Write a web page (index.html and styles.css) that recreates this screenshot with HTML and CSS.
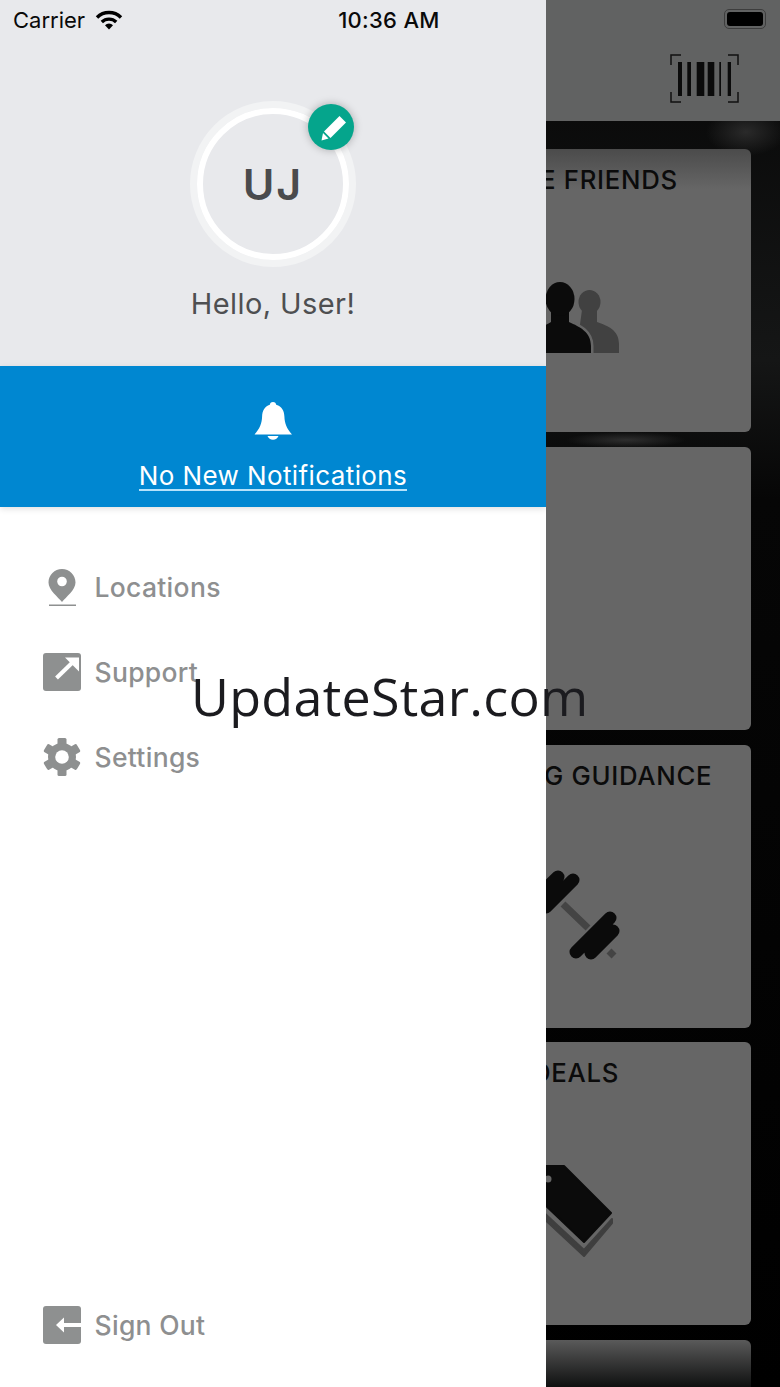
FILE: index.html
```html
<!DOCTYPE html>
<html>
	<head>
		<meta charset="utf-8">
		<title>Menu</title>
		<link rel="stylesheet" href="styles.css">
	</head>
	<body>
		<div id="screen">
			<div id="drawer">
				<div id="profile">
					<div id="statusBar">
						<span class="carrier">Carrier</span>
						<svg class="wifi" viewBox="0 0 28 21">
							<path d="M2 8.500a17 17 0 0 1 24 0" fill="none" stroke="#000" stroke-width="3.400"/>
							<path d="M6.800 13a10.400 10.400 0 0 1 14.400 0" fill="none" stroke="#000" stroke-width="3.400"/>
							<path d="M10 16.200a5.600 5.600 0 0 1 8 0L14 20.600z" fill="#000"/>
						</svg>
						<span class="time">10:36 AM</span>
					</div>
					<div id="avatar">
						<span class="initials">UJ</span>
						<div id="editBadge">
							<svg viewBox="0 0 46 46">
								<path d="M31.500 12l6.500 6.500L22.500 34 16 27.500z" fill="#fff"/>
								<path d="M15 29l5.500 5.500-7 2z" fill="#fff"/>
							</svg>
						</div>
					</div>
					<div class="hello">Hello, User!</div>
				</div>
				<div id="notifications">
					<svg class="bell" viewBox="0 0 38 38">
						<path d="M19 0c2 0 3 1.200 3.200 2.700C28 4.200 30.200 9 30.400 14.500c.2 6.500 2.200 12 7.600 18H.5c5.400-6 7.400-11.500 7.600-18C8.300 9 10.500 4.200 15.800 2.700 16 1.200 17 0 19 0z" fill="#fff"/>
						<path d="M13.500 34h11c-.8 2.300-3 3.800-5.500 3.800s-4.700-1.500-5.500-3.800z" fill="#fff"/>
					</svg>
					<a class="notifyLink">No New Notifications</a>
				</div>
				<div id="menu">
					<div class="menuRow">
						<svg class="menuIcon" viewBox="0 0 38 38">
							<path d="M19 1C11.500 1 5.500 7 5.500 14.500 5.500 22 15 29 19 34c4-5 13.500-12 13.500-19.500C32.500 7 26.500 1 19 1z" fill="#8e9090"/>
							<circle cx="19" cy="13.500" r="4.800" fill="#fff"/>
							<rect x="6" y="36.500" width="27" height="1.500" fill="#8e9090"/>
						</svg>
						<span>Locations</span>
					</div>
					<div class="menuRow">
						<svg class="menuIcon" viewBox="0 0 38 38">
							<rect width="38" height="38" rx="3" fill="#8e9090"/>
							<path d="M13.500 25L30 9" stroke="#fff" stroke-width="4"/>
							<path d="M22 4.500h14v14z" fill="#fff"/>
						</svg>
						<span>Support</span>
					</div>
					<div class="menuRow">
						<svg class="menuIcon" viewBox="0 0 38 38">
							<g fill="#8e9090">
								<rect x="14.500" y="0" width="9" height="38" rx="1.500"/>
								<rect x="14.500" y="0" width="9" height="38" rx="1.500" transform="rotate(60 19 19)"/>
								<rect x="14.500" y="0" width="9" height="38" rx="1.500" transform="rotate(120 19 19)"/>
								<circle cx="19" cy="19" r="14"/>
							</g>
							<circle cx="19" cy="19" r="6.800" fill="#fff"/>
						</svg>
						<span>Settings</span>
					</div>
					<div class="menuRow signOut">
						<svg class="menuIcon" viewBox="0 0 38 38">
							<rect width="38" height="38" rx="3" fill="#8e9090"/>
							<path d="M18 19h20" stroke="#fff" stroke-width="4"/>
							<path d="M13 19l8-7.500v15z" fill="#fff"/>
						</svg>
						<span>Sign Out</span>
					</div>
				</div>
			</div>
			<div id="backdrop">
				<div id="topBar">
					<div class="battery"><div class="batteryFill"></div></div>
					<svg class="barcode" viewBox="0 0 69 49">
						<path d="M11 1H1v10M58 1h10v10M1 38v10h10M68 38v10H58" fill="none" stroke="#111" stroke-width="1.500"/>
						<g fill="#0b0b0b">
							<rect x="8" y="8" width="4" height="34"/>
							<rect x="17.300" y="8" width="3.700" height="34"/>
							<rect x="26.700" y="8" width="7.600" height="34"/>
							<rect x="37.700" y="8" width="6.600" height="34"/>
							<rect x="49.300" y="8" width="1.700" height="34"/>
							<rect x="57.700" y="8" width="3.300" height="34"/>
						</g>
					</svg>
				</div>
				<div id="cards">
					<div class="card cardFade">
						<div class="cardTitle friendsTitle">E FRIENDS</div>
						<svg class="cardIcon" viewBox="0 0 90 90">
							<ellipse cx="43.500" cy="32" rx="11" ry="12" fill="#414141"/>
							<path d="M36 40h15v12c11 4 22 8 22 22v9H30z" fill="#414141"/>
							<path d="M-17 83V72c0-10 12-14 22-20V40h18v12c11 5 22 10 22 24v7z" fill="#0b0b0b" stroke="#666" stroke-width="5" paint-order="stroke"/>
							<ellipse cx="14" cy="29" rx="14.500" ry="17" fill="#0b0b0b"/>
						</svg>
					</div>
					<div class="card"></div>
					<div class="card">
						<div class="cardTitle guidanceTitle">G GUIDANCE</div>
						<svg class="cardIcon" viewBox="0 0 90 90">
							<path d="M17 38l25 24M63 85l5 5" stroke="#444" stroke-width="7" fill="none"/>
							<g stroke="#0b0b0b" stroke-width="13" stroke-linecap="round" fill="none">
								<path d="M30 86L64 52M45 87L67 65M12 11L-25 47M27 14L0 41"/>
							</g>
						</svg>
					</div>
					<div class="card">
						<div class="cardTitle dealsTitle">DEALS</div>
						<svg class="cardIcon" viewBox="0 0 90 90">
							<path d="M-5 47L38 87 66 56V60L38 93-5 53z" fill="#3f3f3f" stroke="#3f3f3f" stroke-linejoin="round" stroke-width="2"/>
							<path d="M-5 3H18L65 50 38 79-5 38z" fill="#0b0b0b" stroke="#0b0b0b" stroke-linejoin="round" stroke-width="2"/>
							<circle cx="2" cy="16" r="3.500" fill="#666"/>
						</svg>
					</div>
					<div class="card cardLast"></div>
				</div>
			</div>
			<div id="watermark">UpdateStar.com</div>
		</div>
	</body>
</html>
```

FILE: styles.css
```css
html, body{
	margin:0;
	padding:0;
}
body{
	font-family:"Inter","Liberation Sans",sans-serif;
}
#screen{
	position:relative;
	display:flex;
	width:780px;
	height:1387px;
	overflow:hidden;
}
#drawer{
	display:flex;
	flex-direction:column;
	width:546px;
	background-color:#fff;
}
#profile{
	display:flex;
	flex-direction:column;
	align-items:center;
	height:366px;
	background-color:#e8e9ec;
}
#statusBar{
	display:flex;
	align-items:center;
	align-self:stretch;
	height:40px;
	padding-left:13px;
	color:#0a0a0a;
	font-size:22px;
}
.wifi{
	width:28px;
	height:21px;
	margin:-2px 0 0 10px;
}
.time{
	margin-left:215px;
	font-weight:500;
	letter-spacing:.3px;
}
#avatar{
	position:relative;
	display:flex;
	align-items:center;
	justify-content:center;
	box-sizing:border-box;
	width:166px;
	height:166px;
	margin-top:61px;
	border:7px solid #f2f3f4;
	border-radius:50%;
}
#avatar:before{
	content:"";
	position:absolute;
	top:0;
	left:0;
	right:0;
	bottom:0;
	border:6px solid #fff;
	border-radius:50%;
}
.initials{
	color:#4a4b4d;
	font-size:43px;
	font-weight:600;
	letter-spacing:2px;
}
#editBadge{
	position:absolute;
	top:-4px;
	right:-5px;
	width:46px;
	height:46px;
	border-radius:50%;
	background-color:#05a58c;
	box-shadow:0 0 9px rgba(0,0,0,.28);
}
#editBadge svg{
	display:block;
}
.hello{
	margin-top:19px;
	color:#4e4f51;
	font-size:29px;
	letter-spacing:.4px;
	line-height:36px;
}
#notifications{
	display:flex;
	flex-direction:column;
	align-items:center;
	height:141px;
	background-color:#0087d1;
	box-shadow:0 2px 6px rgba(0,0,0,.12);
}
.bell{
	width:38px;
	height:38px;
	margin-top:36px;
}
.notifyLink{
	margin-top:22px;
	color:#fff;
	font-size:26px;
	letter-spacing:.4px;
	line-height:27px;
	border-bottom:2px solid #b5e2fb;
}
#menu{
	flex:1;
	display:flex;
	flex-direction:column;
	gap:47px;
	padding:61px 0 43px 43px;
}
.menuRow{
	display:flex;
	align-items:center;
	gap:13.500px;
	height:38px;
	color:#8e8f90;
	font-size:26.500px;
	font-weight:500;
	letter-spacing:.3px;
}
.menuIcon{
	width:38px;
	height:38px;
}
.signOut{
	margin-top:auto;
}
#backdrop{
	flex:1;
	display:flex;
	flex-direction:column;
	overflow:hidden;
	background:
		radial-gradient(40px 24px at 200px 132px, #2a2a2a, transparent),
		radial-gradient(60px 8px at 80px 440px, #2e2e2e, transparent),
		linear-gradient(180deg, #060606 0, #151616 360px, #060606 500px, #000 100%);
}
#topBar{
	display:flex;
	flex-direction:column;
	flex-shrink:0;
	height:121px;
	background-color:#616262;
}
.battery{
	box-sizing:border-box;
	width:42px;
	height:20px;
	margin:9px 0 0 178px;
	padding:2px;
	border:1.500px solid #3d3d3d;
	border-radius:5px;
}
.batteryFill{
	height:100%;
	border-radius:3px;
	background-color:#000;
}
.barcode{
	width:69px;
	height:49px;
	margin:25px 0 0 124px;
}
#cards{
	display:flex;
	flex-direction:column;
	gap:14.750px;
	padding:28px 29px 0 0;
}
.card{
	flex-shrink:0;
	box-sizing:border-box;
	height:283px;
	padding-top:18px;
	border-radius:0 6px 6px 0;
	background-color:#666;
}
.cardFade{
	background:linear-gradient(180deg, #4b4b4b 0, #666 40px);
}
.cardLast{
	background:linear-gradient(180deg, #5a5a5a 0, #0f1010 47px);
}
.cardTitle{
	height:26px;
	color:#0b0b0b;
	font-size:25.750px;
	font-weight:500;
	letter-spacing:.7px;
	line-height:26px;
	white-space:nowrap;
}
.friendsTitle{
	margin-left:-6px;
}
.guidanceTitle{
	margin-left:-2px;
}
.dealsTitle{
	margin-left:-14px;
}
.cardIcon{
	display:block;
	width:90px;
	height:90px;
	margin-top:77px;
	overflow:visible;
}
#watermark{
	position:absolute;
	top:660px;
	left:191px;
	color:#1b1b1f;
	font-family:"Open Sans",sans-serif;
	font-size:52px;
	letter-spacing:.3px;
	line-height:72px;
	white-space:nowrap;
}
```
